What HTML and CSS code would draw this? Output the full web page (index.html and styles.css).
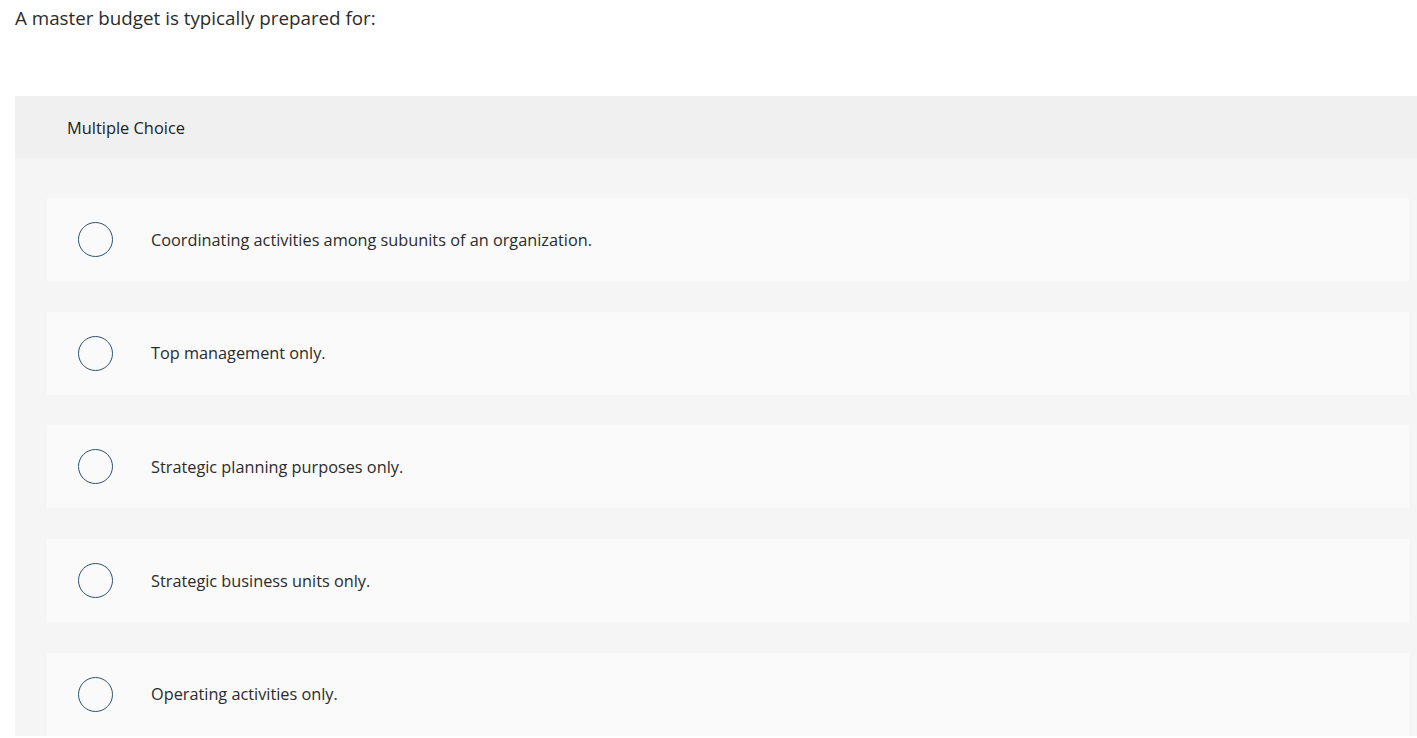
FILE: index.html
```html
<!DOCTYPE html>
<html lang="en">
<head>
    <meta charset="UTF-8">
    <meta name="viewport" content="width=device-width, initial-scale=1.0">
    <link rel="stylesheet" href="styles.css">
    <title>Multiple Choice</title>
</head>
<body>

    <p class="question">A master budget is typically prepared for:</p>

    <div class="choice-panel">
        <div class="choice-header">Multiple Choice</div>
        <div class="choice-list">
            <label class="choice-item">
                <span class="choice-radio"></span>
                <span class="choice-text">Coordinating activities among subunits of an organization.</span>
            </label>
            <label class="choice-item">
                <span class="choice-radio"></span>
                <span class="choice-text">Top management only.</span>
            </label>
            <label class="choice-item">
                <span class="choice-radio"></span>
                <span class="choice-text">Strategic planning purposes only.</span>
            </label>
            <label class="choice-item">
                <span class="choice-radio"></span>
                <span class="choice-text">Strategic business units only.</span>
            </label>
            <label class="choice-item">
                <span class="choice-radio"></span>
                <span class="choice-text">Operating activities only.</span>
            </label>
        </div>
    </div>

</body>
</html>
```

FILE: styles.css
```css
* {
    margin: 0;
    padding: 0;
    box-sizing: border-box;
}

body {
    font-family: "Open Sans", Lato, sans-serif;
    color: #333;
    background-color: white;
    overflow: hidden;
    padding: 0 0 0 15px;
}

.question {
    font-size: 18.8px;
    line-height: 24px;
    padding-top: 6px;
    height: 96px;
    color: #2b2b2b;
}

.choice-panel {
    width: 1426px;
    background-color: #f5f5f5;
}

.choice-header {
    height: 62px;
    display: flex;
    align-items: center;
    padding-left: 52px;
    background-color: #f0f0f0;
    font-size: 16.4px;
    color: #222;
}

.choice-list {
    display: flex;
    flex-direction: column;
    gap: 30.7px;
    padding: 40px 32px 0 32px;
}

.choice-item {
    height: 83px;
    display: flex;
    align-items: center;
    background-color: #fafafa;
    padding-left: 31px;
    cursor: pointer;
}

.choice-radio {
    width: 35px;
    height: 35px;
    border: 1.5px solid #2c5275;
    border-radius: 50%;
    flex-shrink: 0;
}

.choice-text {
    margin-left: 38px;
    font-size: 16.3px;
    color: #2b2b2b;
}
```
